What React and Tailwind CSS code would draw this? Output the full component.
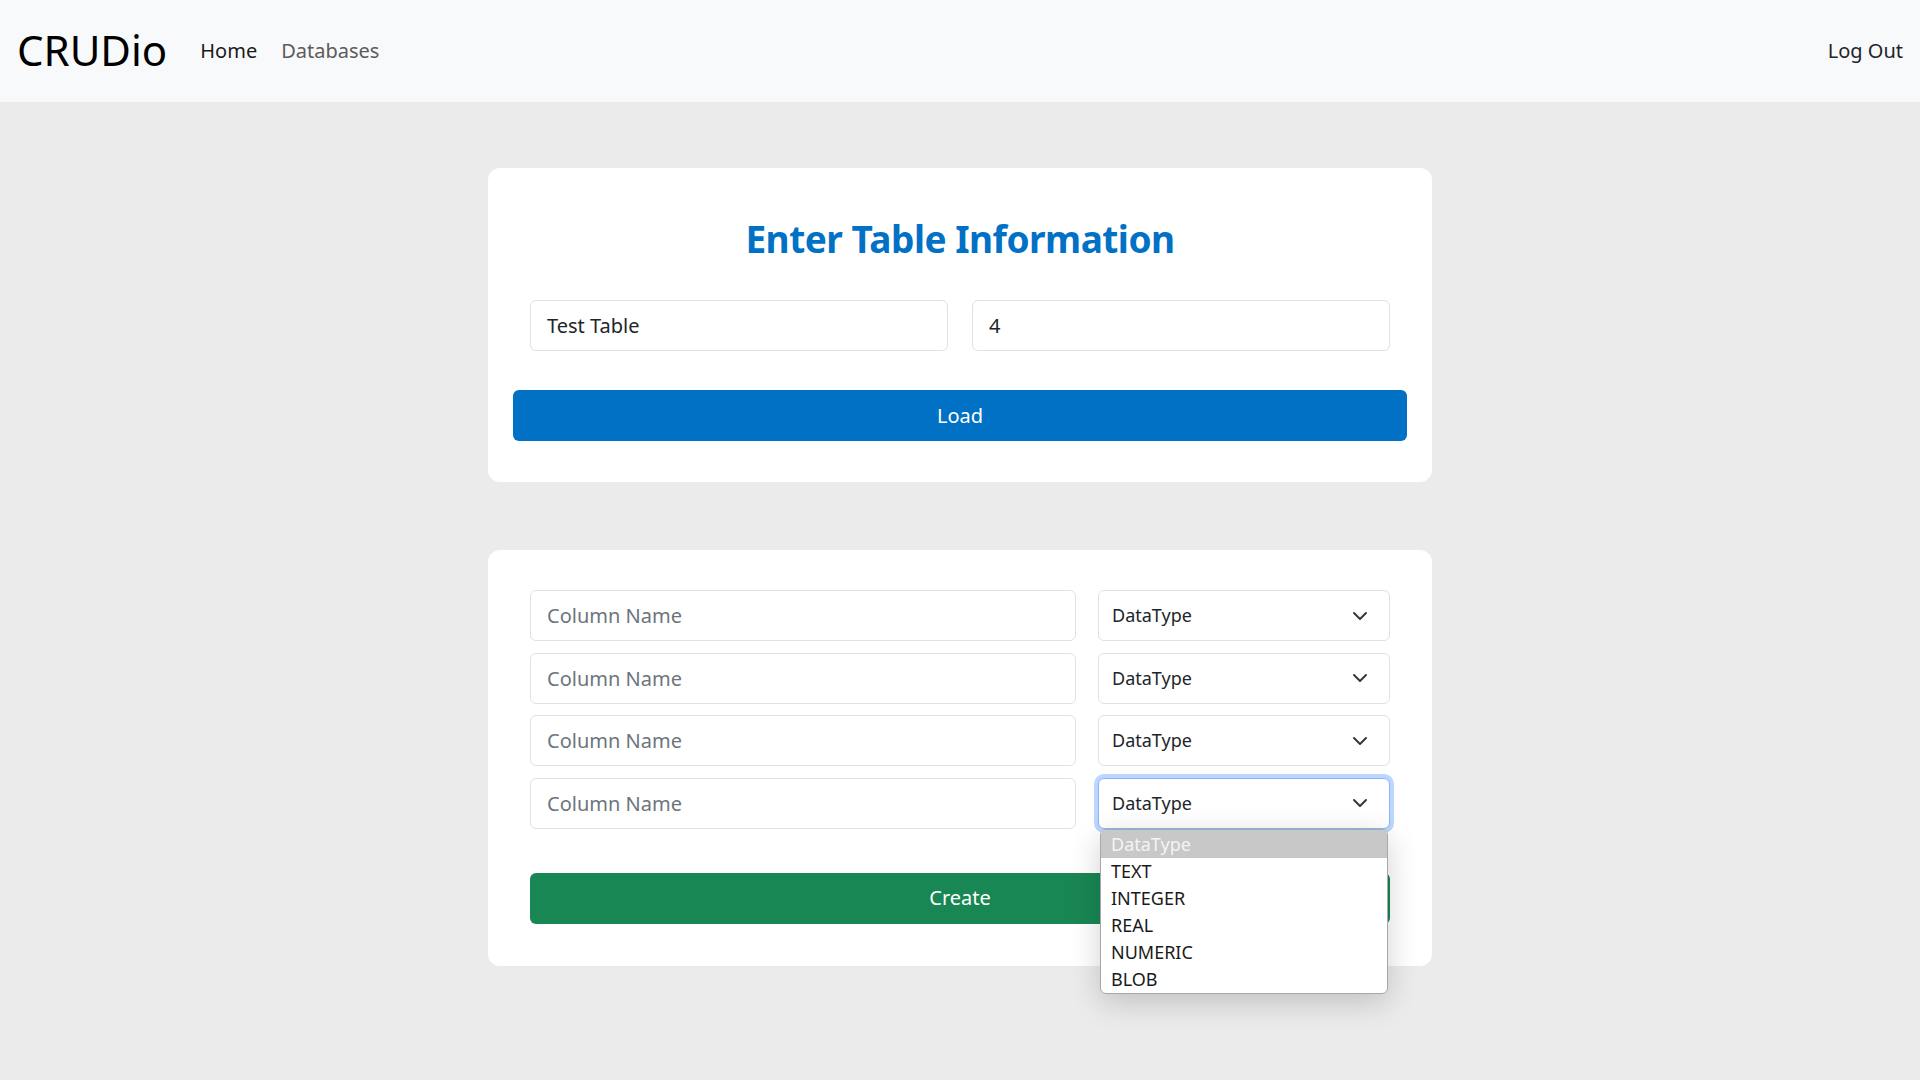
import React from "react";

const font = { fontFamily: '"Noto Sans", "Open Sans", sans-serif' };

const Chevron = () => (
  <svg width="16" height="16" viewBox="0 0 16 16" className="pointer-events-none">
    <path d="M2 5l6 6 6-6" fill="none" stroke="#343a40" strokeWidth="2" strokeLinecap="round" strokeLinejoin="round" />
  </svg>
);

const types = ["TEXT", "INTEGER", "REAL", "NUMERIC", "BLOB"];

function DataTypeSelect({ open }) {
  return (
    <div className="relative">
      <div
        className={[
          "h-[51px] flex items-center justify-between bg-white rounded-md border pl-[13px] pr-[21px] text-[18px] text-[#212529]",
          open ? "border-[#86b7fe] ring-4 ring-[#bcd6fd]" : "border-[#dee2e6]",
        ].join(" ")}
      >
        <span>DataType</span>
        <Chevron />
      </div>
      {open && (
        <ul className="absolute left-[2px] right-[2px] top-[51px] z-10 bg-white border border-[#a8a8a8] rounded-md overflow-hidden shadow-[0_8px_30px_rgba(0,0,0,0.18)] text-[18px] leading-[27px] text-[#1a1a1a]">
          <li className="bg-[#c8c8c8] text-[#f4f4f4] pl-[10px] h-[28px] leading-[28px]">DataType</li>
          {types.map((t) => (
            <li key={t} className="pl-[10px] h-[27px]">
              {t}
            </li>
          ))}
        </ul>
      )}
    </div>
  );
}

export default function App() {
  const rows = [0, 1, 2, 3];
  return (
    <div className="min-h-screen bg-[#ebebeb] pb-10" style={font}>
      {/* navbar */}
      <nav className="h-[102px] bg-[#f8f9fa] flex items-center px-[17px]">
        <span className="text-[42px] text-black leading-none mr-[33px] -mt-[2px]">CRUDio</span>
        <a className="text-[20px] text-[#1a1a1a] mr-[24px]">Home</a>
        <a className="text-[20px] text-[#5c5c5c]">Databases</a>
        <a className="ml-auto text-[20px] text-[#212529]">Log Out</a>
      </nav>

      {/* table info card */}
      <div className="w-[944px] mx-auto mt-[66px] bg-white rounded-xl px-[25px] pt-[47px] pb-[41px]">
        <h1 className="text-center text-[37px] leading-[48px] font-bold text-[#0071c5] tracking-[-0.5px]">
          Enter Table Information
        </h1>
        <div className="grid grid-cols-2 gap-[24px] px-[17px] mt-[37px]">
          <input
            defaultValue="Test Table"
            className="h-[51px] rounded-md border border-[#dee2e6] px-[16px] text-[20px] text-[#212529] outline-none"
          />
          <input
            defaultValue="4"
            className="h-[51px] rounded-md border border-[#dee2e6] px-[16px] text-[20px] text-[#212529] outline-none"
          />
        </div>
        <button className="mt-[39px] w-full h-[51px] rounded-md bg-[#0071c5] text-white text-[20px]">Load</button>
      </div>

      {/* columns card */}
      <div className="w-[944px] mx-auto mt-[68px] bg-white rounded-xl px-[42px] pt-[40px] pb-[42px]">
        <div className="flex flex-col gap-[11.5px]">
          {rows.map((i) => (
            <div key={i} className="grid grid-cols-[1fr_292px] gap-[22px]">
              <input
                placeholder="Column Name"
                className="h-[51px] rounded-md border border-[#dee2e6] px-[16px] text-[20px] text-[#212529] placeholder:text-[#6c757d] outline-none"
              />
              <DataTypeSelect open={i === 3} />
            </div>
          ))}
        </div>
        <button className="mt-[44px] w-full h-[51px] rounded-md bg-[#198754] text-white text-[20px]">Create</button>
      </div>
    </div>
  );
}
